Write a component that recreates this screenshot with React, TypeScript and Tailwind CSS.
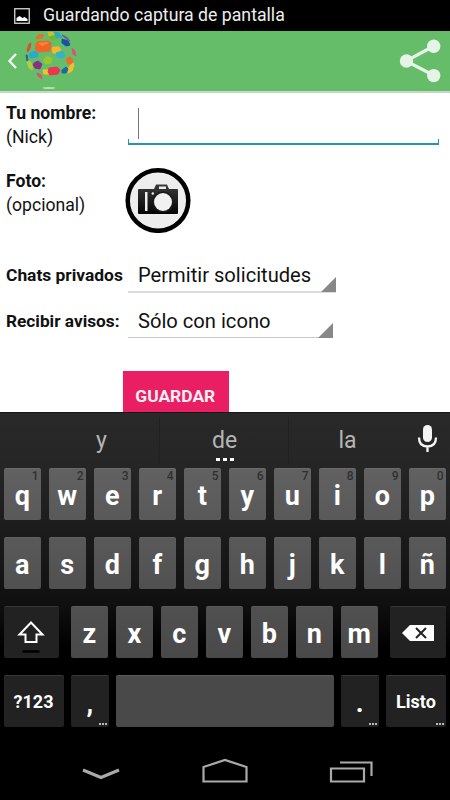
import React from "react";

type KeyProps = { label?: string; hint?: string; className?: string; children?: React.ReactNode };

const Key = ({ label, hint, className = "", children }: KeyProps) => (
  <div className={`relative flex h-[52px] shrink-0 items-center justify-center rounded-[2px] border-t border-white/10 ${className}`}>
    {hint && <span className="absolute right-[2.500px] top-[1px] text-[12px] font-medium leading-[13px] text-[#303030]">{hint}</span>}
    {label && <span className="pt-[2px] text-[27px] font-bold leading-[30px] text-white">{label}</span>}
    {children}
  </div>
);

const Dots = () => (
  <span className="absolute bottom-[2px] right-[2px] flex gap-px">
    <i className="h-[2px] w-[2px] bg-[#bbb]" />
    <i className="h-[2px] w-[2px] bg-[#bbb]" />
    <i className="h-[2px] w-[2px] bg-[#bbb]" />
  </span>
);

const blobs = [
  { d: "M36 37q4-4 8-2l-2 3-5 1z", c: "#e8702a" },
  { d: "M48 32l7 1 2 3-4 3-4-3z", c: "#c4c52c" },
  { d: "M49 37l7-2 2 3-6 2z", c: "#71b52e" },
  { d: "M54 32l5 1 3 4-5 1z", c: "#28a9cb" },
  { d: "M62 35q5 1 8 6l-2-1-4-3z", c: "#74569a" },
  { d: "M62 39l6 2 2 4-4 1-4-3z", c: "#1852a3" },
  { d: "M27 50l2-6 2-1-1 5-2 4z", c: "#dd493a" },
  { d: "M37 42l11-1 3 2-1 8-11 1-4-3z", c: "#f0642a" },
  { d: "M53 47l6 0 2 3-2 4-6-1-1-4z", c: "#fbb52b" },
  { d: "M30 53l5-2 3 2-1 4-6 1-2-2z", c: "#29aaca" },
  { d: "M56 53l6-2 3 4-2 3-6-1z", c: "#36b4c6" },
  { d: "M72 48l3 3 1 5-3-2z", c: "#dc527a" },
  { d: "M26 55l1 0 1 5-1 1z", c: "#315e9c" },
  { d: "M27 62l3-1 3 5-1 4-3-2z", c: "#a8cf42" },
  { d: "M34 63l4-2 4 3-2 5-5-1-2-3z", c: "#883085" },
  { d: "M44 59l4-3 4 3-1 4-5 1-2-2z", c: "#97c72f" },
  { d: "M66 59l4-2 3 3-1 3-4 1z", c: "#f2692e" },
  { d: "M69 67l4-4 1 2-2 6-4 2z", c: "#fcba29" },
  { d: "M62 70l4-3 2 2-2 4-4 0z", c: "#1769a9" },
  { d: "M43 70l5 0 1 4-5 0z", c: "#ffbf25" },
  { d: "M49 68l8-1 3 3-2 4-8 1-2-3z", c: "#ec364f" },
  { d: "M37 73l4 2 1 4-4-3z", c: "#e44e68" },
];

const Globe = () => (
  <svg className="ml-[4px] h-[61px] w-[56px]" viewBox="23 31 56 61">
    {blobs.map((b) => (
      <path key={b.d} d={b.d} fill={b.c} stroke={b.c} strokeWidth="1" strokeLinejoin="round" />
    ))}
    <path d="M38 43l9-1 2 1-7 3z" fill="#f98a2c" />
    <ellipse cx="49" cy="88" rx="6.500" ry=".9" fill="#b9e4ae" />
  </svg>
);

const Share = () => (
  <svg className="h-[46px] w-[44px]" viewBox="398 38 44 46" fill="#e5f4e6">
    <path d="M434 46L406 61L434 75.500" fill="none" stroke="#e5f4e6" strokeWidth="3.200" />
    <circle cx="433.700" cy="46.300" r="6.700" />
    <circle cx="406.500" cy="61" r="6.700" />
    <circle cx="433.700" cy="75.600" r="6.700" />
  </svg>
);

const Camera = () => (
  <svg className="h-[66px] w-[66px]" viewBox="125 167 66 66">
    <defs>
      <linearGradient id="body" x1="0" y1="0" x2="0" y2="1">
        <stop stopColor="#3a3a3a" />
        <stop offset="1" stopColor="#030303" />
      </linearGradient>
    </defs>
    <circle cx="158" cy="200.500" r="30.300" fill="#ededed" stroke="#000" strokeWidth="4.500" />
    <path d="M139 189h15l2-4.500h11l2 4.500h8q1 0 1 1v23q0 1-1 1h-38q-1 0-1-1v-23q0-1 1-1z" fill="url(#body)" />
    <rect x="159" y="186.500" width="7" height="2.500" fill="#eee" />
    <rect x="145" y="192" width="2.500" height="19" fill="#eee" />
    <circle cx="152.800" cy="193.500" r="1.200" fill="#eee" />
    <circle cx="163" cy="202" r="10.500" fill="#1a1a1a" />
    <circle cx="163" cy="202" r="9" fill="#f1f1f1" />
  </svg>
);

const Spinner = ({ text, className }: { text: string; className: string }) => (
  <div className={`relative flex pl-[10px] text-[20.150px] leading-[24px] text-[#111] ${className}`}>
    {text}
    <svg className="absolute -bottom-px right-0 h-[15px] w-[15px]" viewBox="0 0 15 15">
      <path d="M15 0V15H0z" fill="#888" />
    </svg>
  </div>
);

const top = "qwertyuiop".split("");
const home = "asdfghjklñ".split("");
const bottom = "zxcvbnm".split("");

export default function App() {
  return (
    <div className="flex h-[800px] w-[450px] flex-col overflow-hidden whitespace-nowrap bg-white font-['Roboto',sans-serif]">
      <div className="flex h-[31px] shrink-0 items-center bg-black pl-[14px]">
        <svg className="h-4 w-4" viewBox="0 0 16 16">
          <rect x=".75" y=".75" width="14.500" height="14.500" fill="none" stroke="#d8d8d8" strokeWidth="1.300" />
          <path d="M2.500 13V10l3-2 3 2 2-1 3 2v2z" fill="#fff" />
        </svg>
        <span className="ml-[13px] text-[17.700px] leading-[21px] text-[#eee]">Guardando captura de pantalla</span>
      </div>

      <header className="flex h-[62px] shrink-0 items-center border-b-2 border-[#c5d8c7] bg-[#65bd6a]">
        <svg className="ml-[7px] h-[18px] w-[12px]" viewBox="0 0 12 18">
          <path d="M9 2L2.500 9L9 16" fill="none" stroke="#f2fff2" strokeWidth="2.300" />
        </svg>
        <Globe />
        <div className="ml-auto mr-[8px]"><Share /></div>
      </header>

      <main className="h-[319px] shrink-0 overflow-hidden pl-[6px] text-[17.600px] text-[#111]">
        <div className="flex h-[69px] pt-[8px]">
          <div className="w-[122px] leading-[24px]">
            <div className="font-bold">Tu nombre:</div>
            <div>(Nick)</div>
          </div>
          <div className="flex h-[44px] w-[311px] flex-col">
            <div className="ml-[10px] mt-[7px] h-[31px] w-px bg-[#777]" />
            <div className="mt-auto h-[6px] border-x border-b-2 border-[#2596ac]" />
          </div>
        </div>
        <div className="flex h-[94px]">
          <div className="w-[119px] pt-[7px] leading-[24px]">
            <div className="font-bold">Foto:</div>
            <div>(opcional)</div>
          </div>
          <div className="pt-[5px]"><Camera /></div>
        </div>
        <div className="flex h-[45px] pt-[7px]">
          <div className="w-[122px] text-[17.400px] font-bold leading-[24px]">Chats privados</div>
          <Spinner text="Permitir solicitudes" className="h-[30px] w-[208px] border-b-2 border-[#ddd]" />
        </div>
        <div className="flex h-[70px] pt-[7px]">
          <div className="w-[122px] pt-[1px] text-[17.250px] font-bold leading-[24px]">Recibir avisos:</div>
          <Spinner text="Sólo con icono" className="h-[30px] w-[205px] border-b border-[#c8c8c8] pt-[1px]" />
        </div>
        <button className="ml-[117px] flex h-[50px] w-[105.500px] items-center justify-center bg-[#e91e63] pr-px text-[17.400px] font-bold text-[#fff0f5]">GUARDAR</button>
      </main>

      <section className="flex h-[388px] shrink-0 flex-col border-t border-[#171717] bg-[linear-gradient(#292929_0px,#252525_56px,#1c1c1c_115px,#101010_190px,#000_235px)]">
        <div className="flex h-[56px] items-center text-[23px] text-[#b5b5b5]">
          <div className="flex h-[48px] w-[160px] items-center justify-end border-r border-[#202020] pr-[52px] pt-px">y</div>
          <div className="relative flex h-[48px] w-[129px] items-center justify-center border-r border-[#202020] pl-px pt-px">
            de
            <span className="absolute bottom-[4px] left-[56px] flex gap-[3px]">
              <i className="h-[3px] w-[4px] bg-white" />
              <i className="h-[3px] w-[4px] bg-white" />
              <i className="h-[3px] w-[4px] bg-white" />
            </span>
          </div>
          <div className="w-[117px] pt-px text-center">la</div>
          <svg className="mb-[6px] ml-[11px] h-[30px] w-[22px]" viewBox="0 0 22 30">
            <rect x="6" y="2" width="9" height="17" rx="4.500" fill="#f5f5f5" />
            <path d="M2 14.500q0 9 8.500 9t8.500-9M10.500 23v6" fill="none" stroke="#f5f5f5" strokeWidth="2.300" />
          </svg>
        </div>
        <div className="flex gap-[7.500px] pl-[3.500px]">
          {top.map((k, i) => <Key key={k} label={k} hint={String((i + 1) % 10)} className="w-[37.500px] bg-linear-to-b from-[#616161] to-[#595959]" />)}
        </div>
        <div className="mt-[17px] flex gap-[7.500px] pl-[3.500px]">
          {home.map((k) => <Key key={k} label={k} className="w-[37.500px] bg-linear-to-b from-[#595959] to-[#505050]" />)}
        </div>
        <div className="mt-[17px] flex gap-[7.500px] pl-[3.500px]">
          <Key className="mr-[4px] w-[55.500px] bg-[#222]">
            <svg className="h-[40px] w-[32px]" viewBox="0 0 32 40">
              <path d="M16 9.500L27.500 21.500H21.500V29H10.500V21.500H4.500z" fill="none" stroke="#fff" strokeWidth="2" />
              <path d="M7.500 38.500h17" stroke="#000" strokeWidth="2.500" />
            </svg>
          </Key>
          {bottom.map((k) => <Key key={k} label={k} className="w-[37.500px] bg-linear-to-b from-[#505050] to-[#494949]" />)}
          <Key className="ml-[4.500px] w-[55.500px] bg-[#222]">
            <svg className="h-[18px] w-[34px]" viewBox="0 0 34 18">
              <path d="M1 9L9 1H33V17H9z" fill="#fff" />
              <path d="M15 4l10 10M25 4L15 14" stroke="#222" strokeWidth="2" />
            </svg>
          </Key>
        </div>
        <div className="mt-[17px] flex gap-[7.500px] pl-[3.500px]">
          <Key className="w-[60px] bg-[#222]"><span className="text-[18px] font-bold text-white">?123</span></Key>
          <Key label="," className="w-[37.500px] bg-[#222]"><Dots /></Key>
          <Key className="w-[217.500px] bg-[#494949]" />
          <Key label="." className="w-[37.500px] bg-[#222]"><Dots /></Key>
          <Key className="w-[60px] bg-[#222]"><span className="text-[18px] font-bold text-white">Listo</span><Dots /></Key>
        </div>
        <nav className="flex h-[73px] bg-black">
          <svg className="h-[73px] w-[450px]" viewBox="0 727 450 73" fill="none" stroke="#aaa" strokeWidth="2.200">
            <path d="M83 770L101 777.500L119 770" strokeWidth="3" />
            <path d="M203.500 781.500V767L225 760L246.500 767V781.500z" />
            <path d="M331 768.500H364V781.500H331zM340 762.500H371.500V776" />
          </svg>
        </nav>
      </section>
    </div>
  );
}
